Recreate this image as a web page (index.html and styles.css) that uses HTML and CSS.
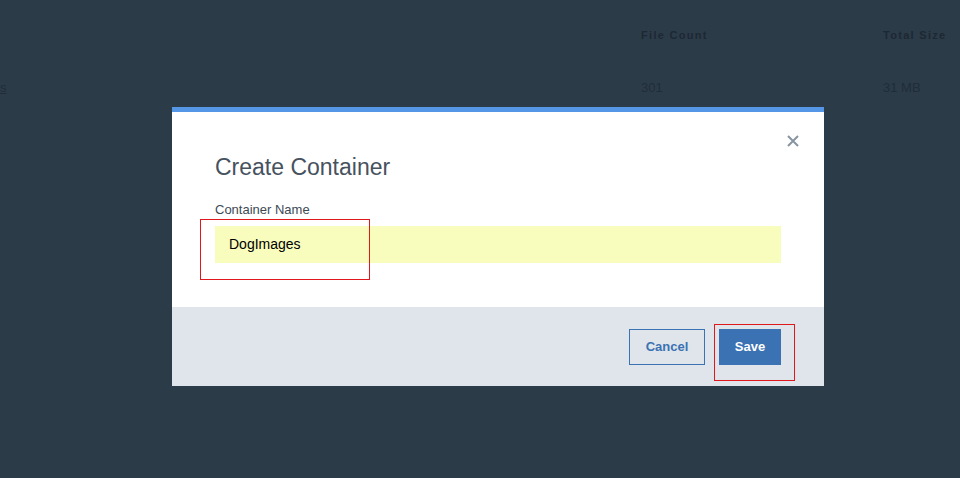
FILE: index.html
```html
<!DOCTYPE html>
<html>
<head>
<meta charset="utf-8">
<link rel="stylesheet" href="styles.css">
</head>
<body>
<div class="page">
  <div class="table">
    <div class="row head">
      <div class="cell"></div>
      <div class="cell">File Count</div>
      <div class="cell">Total Size</div>
    </div>
    <div class="row data">
      <div class="cell"><a class="name">s</a></div>
      <div class="cell">301</div>
      <div class="cell">31 MB</div>
    </div>
  </div>
</div>

<div class="modal">
  <div class="modal-body">
    <button class="close" aria-label="Close">
      <svg width="12" height="12" viewBox="0 0 12 12"><path d="M1 1L11 11M11 1L1 11" stroke="#8795a1" stroke-width="2" fill="none"/></svg>
    </button>
    <h2 class="title">Create Container</h2>
    <label class="label">Container Name</label>
    <div class="input">DogImages</div>
  </div>
  <div class="modal-footer">
    <button class="btn btn-secondary">Cancel</button>
    <button class="btn btn-primary">Save</button>
  </div>
  <div class="mark mark-input"></div>
  <div class="mark mark-save"></div>
</div>
</body>
</html>
```
FILE: styles.css
```css
html, body {
  margin: 0;
  padding: 0;
}
body {
  width: 960px;
  height: 478px;
  overflow: hidden;
  background: #2c3b48;
  font-family: "Liberation Sans", Arial, sans-serif;
  position: relative;
}
.table {
  display: flex;
  flex-direction: column;
}
.row {
  display: grid;
  grid-template-columns: 641px 242px 1fr;
}
.head {
  padding-top: 29px;
  height: 20px;
  font-size: 11px;
  font-weight: bold;
  letter-spacing: 1.3px;
  color: #1c2834;
}
.data {
  padding-top: 31px;
  font-size: 13px;
  color: #1f2d3a;
  line-height: 16px;
}
.name {
  color: #1f2d3a;
  text-decoration: underline;
}
.modal {
  position: absolute;
  left: 172px;
  top: 107px;
  width: 652px;
  border-top: 5px solid #5596e6;
  background: #fff;
}
.modal-body {
  position: relative;
  padding: 42px 43px 44px 43px;
  display: flex;
  flex-direction: column;
}
.close {
  position: absolute;
  right: 25px;
  top: 23px;
  border: 0;
  background: none;
  padding: 0;
  width: 12px;
  height: 12px;
  display: flex;
}
.title {
  margin: 0;
  font-size: 23px;
  font-weight: normal;
  color: #46525e;
  line-height: 26px;
}
.label {
  margin-top: 22px;
  font-size: 13px;
  color: #3d4a56;
  line-height: 15px;
}
.input {
  margin-top: 9px;
  height: 37px;
  background: #f8fcbc;
  padding-left: 14px;
  font-size: 14px;
  line-height: 37px;
  color: #000;
}
.modal-footer {
  background: #dfe5eb;
  height: 79px;
  padding: 0 43px;
  display: flex;
  justify-content: flex-end;
  align-items: center;
  gap: 14px;
}
.btn {
  height: 36px;
  font-family: "Liberation Sans", Arial, sans-serif;
  font-size: 13px;
  font-weight: bold;
  padding: 0;
  cursor: pointer;
}
.btn-secondary {
  width: 76px;
  background: transparent;
  border: 1px solid #3b72b3;
  color: #3b72b3;
}
.btn-primary {
  width: 62px;
  background: #3b72b3;
  border: 1px solid #3b72b3;
  color: #fff;
}
.mark {
  position: absolute;
  border: 1px solid #e0181c;
  pointer-events: none;
}
.mark-input {
  left: 28px;
  top: 107px;
  width: 168px;
  height: 59px;
}
.mark-save {
  left: 542px;
  top: 212px;
  width: 79px;
  height: 55px;
}
```
